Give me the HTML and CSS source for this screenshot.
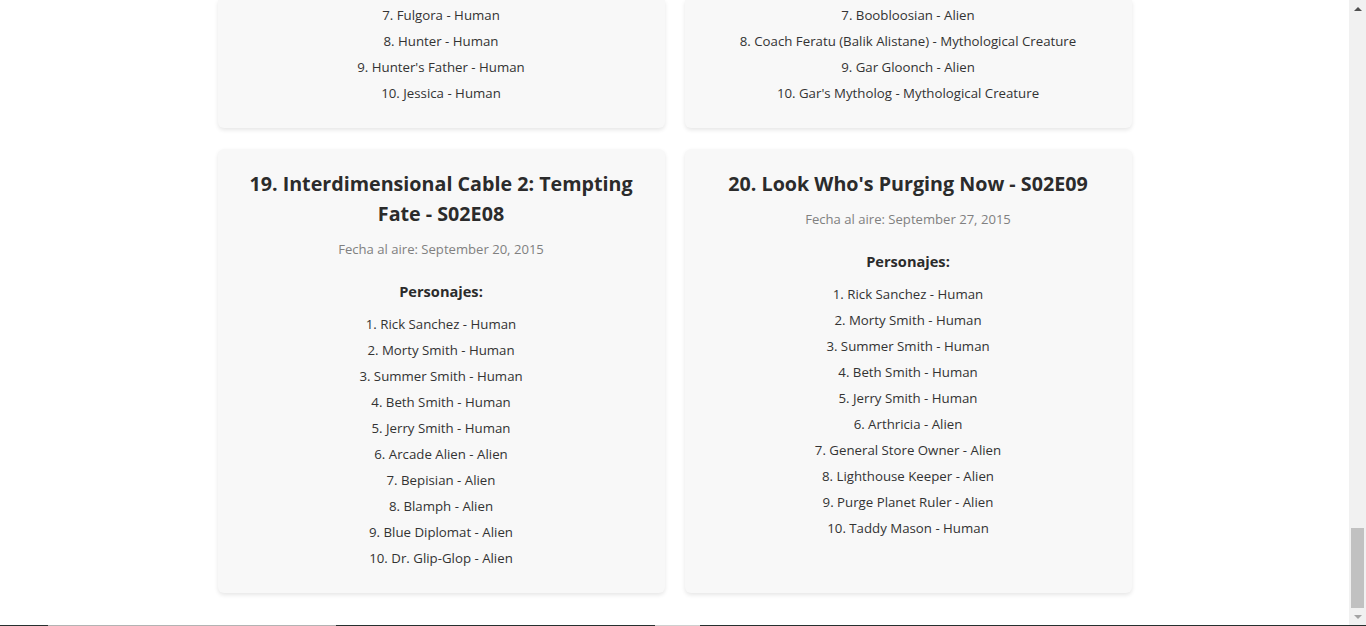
FILE: index.html
```html
<!DOCTYPE html>
<html lang="es">
<head>
<meta charset="utf-8">
<title>Episodios</title>
<link rel="stylesheet" href="styles.css">
</head>
<body>
<div class="screen">
  <main class="page">
    <div class="grid">
      <section class="card card--clipped">
        <ol class="chars">
          <li>7. Fulgora - Human</li>
          <li>8. Hunter - Human</li>
          <li>9. Hunter's Father - Human</li>
          <li>10. Jessica - Human</li>
        </ol>
      </section>
      <section class="card card--clipped">
        <ol class="chars">
          <li>7. Boobloosian - Alien</li>
          <li>8. Coach Feratu (Balik Alistane) - Mythological Creature</li>
          <li>9. Gar Gloonch - Alien</li>
          <li>10. Gar's Mytholog - Mythological Creature</li>
        </ol>
      </section>
      <section class="card">
        <h2 class="title">19. Interdimensional Cable 2: Tempting Fate - S02E08</h2>
        <p class="date">Fecha al aire: September 20, 2015</p>
        <h3 class="label">Personajes:</h3>
        <ol class="chars">
          <li>1. Rick Sanchez - Human</li>
          <li>2. Morty Smith - Human</li>
          <li>3. Summer Smith - Human</li>
          <li>4. Beth Smith - Human</li>
          <li>5. Jerry Smith - Human</li>
          <li>6. Arcade Alien - Alien</li>
          <li>7. Bepisian - Alien</li>
          <li>8. Blamph - Alien</li>
          <li>9. Blue Diplomat - Alien</li>
          <li>10. Dr. Glip-Glop - Alien</li>
        </ol>
      </section>
      <section class="card">
        <h2 class="title">20. Look Who's Purging Now - S02E09</h2>
        <p class="date">Fecha al aire: September 27, 2015</p>
        <h3 class="label">Personajes:</h3>
        <ol class="chars">
          <li>1. Rick Sanchez - Human</li>
          <li>2. Morty Smith - Human</li>
          <li>3. Summer Smith - Human</li>
          <li>4. Beth Smith - Human</li>
          <li>5. Jerry Smith - Human</li>
          <li>6. Arthricia - Alien</li>
          <li>7. General Store Owner - Alien</li>
          <li>8. Lighthouse Keeper - Alien</li>
          <li>9. Purge Planet Ruler - Alien</li>
          <li>10. Taddy Mason - Human</li>
        </ol>
      </section>
    </div>
  </main>
  <div class="scrollbar">
    <div class="sb-arrow sb-up"></div>
    <div class="sb-track"><div class="sb-thumb"></div></div>
    <div class="sb-arrow sb-down"></div>
  </div>
</div>
<div class="bottom-line"></div>
</body>
</html>
```

FILE: styles.css
```css
html, body {
  margin: 0;
  padding: 0;
  height: 626px;
  overflow: hidden;
  background: #ffffff;
}
body {
  font-family: "Open Sans", "Noto Sans", sans-serif;
  color: #333333;
  display: flex;
  flex-direction: column;
}
.screen {
  display: flex;
  height: 625px;
}
.page {
  flex: 1;
  display: flex;
  justify-content: center;
}
.grid {
  width: 914px;
  display: grid;
  grid-template-columns: 447px 447px;
  column-gap: 20px;
  row-gap: 21px;
  align-content: start;
}
.card {
  background: #f8f8f8;
  border-radius: 6px;
  box-shadow: 0 2px 4px rgba(0, 0, 0, 0.1);
  padding: 20px 20px 22px;
  text-align: center;
}
.card--clipped {
  border-radius: 0 0 6px 6px;
  padding-top: 2px;
}
.title {
  margin: 0;
  font-size: 19.7px;
  line-height: 30px;
  font-weight: 700;
  color: #2b2b2b;
}
.date {
  margin: 10px 0 0;
  font-size: 13.1px;
  line-height: 20px;
  color: #808080;
}
.label {
  margin: 20px 0 0;
  font-size: 14.6px;
  line-height: 24px;
  font-weight: 700;
  color: #2b2b2b;
}
.chars {
  list-style: none;
  margin: 8px 0 0;
  padding: 0;
  font-size: 13.25px;
  line-height: 26px;
  color: #333333;
}
.card--clipped .chars {
  margin-top: 0;
}
.scrollbar {
  width: 17px;
  background: #f1f1f1;
  display: flex;
  flex-direction: column;
}
.sb-arrow {
  height: 17px;
  display: flex;
  align-items: center;
  justify-content: center;
}
.sb-up::before {
  content: "";
  border-left: 4px solid transparent;
  border-right: 4px solid transparent;
  border-bottom: 4px solid #505050;
}
.sb-down::before {
  content: "";
  border-left: 4px solid transparent;
  border-right: 4px solid transparent;
  border-top: 4px solid #a3a3a3;
}
.sb-track {
  flex: 1;
  display: flex;
  flex-direction: column;
  justify-content: flex-end;
  padding: 0 2px;
}
.sb-thumb {
  height: 80px;
  background: #c1c1c1;
}
.bottom-line {
  height: 1px;
  background: linear-gradient(to right, #27302f 0 48px, #b3b3b3 48px 336px, #27302f 336px 655px, #cfcfcf 655px 700px, #27302f 700px);
}
```
